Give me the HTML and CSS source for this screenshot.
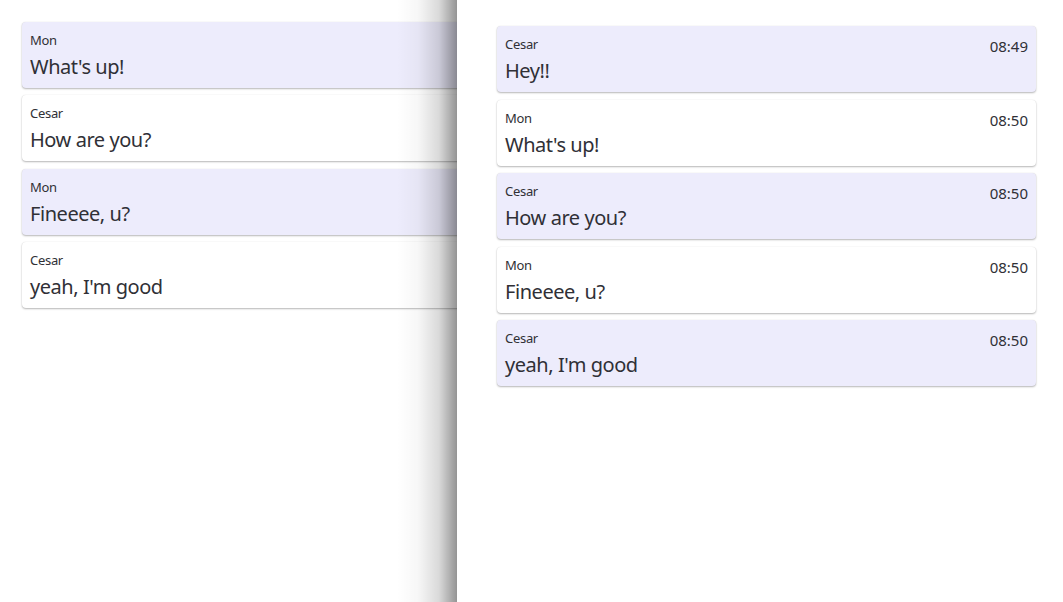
FILE: index.html
```html
<!DOCTYPE html>
<html lang="en">
<head>
<meta charset="utf-8">
<title>Chat</title>
<link rel="stylesheet" href="styles.css">
</head>
<body>
<div class="stage">
  <section class="page page-back">
    <div class="card tint">
      <div class="body"><div class="sender">Mon</div><div class="text">What's up!</div></div>
    </div>
    <div class="card">
      <div class="body"><div class="sender">Cesar</div><div class="text">How are you?</div></div>
    </div>
    <div class="card tint">
      <div class="body"><div class="sender">Mon</div><div class="text">Fineeee, u?</div></div>
    </div>
    <div class="card">
      <div class="body"><div class="sender">Cesar</div><div class="text">yeah, I'm good</div></div>
    </div>
  </section>
  <section class="page page-front">
    <div class="card tint">
      <div class="body"><div class="sender">Cesar</div><div class="text">Hey!!</div></div>
      <div class="time">08:49</div>
    </div>
    <div class="card">
      <div class="body"><div class="sender">Mon</div><div class="text">What's up!</div></div>
      <div class="time">08:50</div>
    </div>
    <div class="card tint">
      <div class="body"><div class="sender">Cesar</div><div class="text">How are you?</div></div>
      <div class="time">08:50</div>
    </div>
    <div class="card">
      <div class="body"><div class="sender">Mon</div><div class="text">Fineeee, u?</div></div>
      <div class="time">08:50</div>
    </div>
    <div class="card tint">
      <div class="body"><div class="sender">Cesar</div><div class="text">yeah, I'm good</div></div>
      <div class="time">08:50</div>
    </div>
  </section>
</div>
</body>
</html>
```
FILE: styles.css
```css
html, body {
  margin: 0;
  padding: 0;
  background: #fff;
}
body {
  font-family: "Noto Sans", "Open Sans", sans-serif;
  color: #303036;
}
.stage {
  display: flex;
  width: 1063px;
  height: 602px;
  overflow: hidden;
}
.page {
  display: flex;
  flex-direction: column;
  gap: 7.5px;
  box-sizing: border-box;
  background: #fff;
}
.page-back {
  flex: 0 0 457px;
  overflow: hidden;
  padding: 21.5px 0 0 22px;
}
.page-back .card {
  width: 539px;
  flex: none;
}
.page-front {
  flex: 1 1 auto;
  position: relative;
  padding: 26px 27px 0 40px;
}
.page-front::before {
  content: "";
  position: absolute;
  top: 0;
  bottom: 0;
  left: -60px;
  width: 60px;
  background: linear-gradient(to right,
    rgba(0,0,0,0) 0%,
    rgba(0,0,0,0.03) 35%,
    rgba(0,0,0,0.15) 70%,
    rgba(0,0,0,0.42) 100%);
  pointer-events: none;
}
.card {
  display: flex;
  justify-content: space-between;
  align-items: flex-start;
  box-sizing: border-box;
  height: 66px;
  padding: 9px 8px 7px 8px;
  border-radius: 4px;
  background: #fff;
  box-shadow: 0 1px 2px rgba(0,0,0,0.28), 0 0 1px rgba(0,0,0,0.12);
}
.card.tint {
  background: #edecfc;
}
.body {
  display: flex;
  flex-direction: column;
  gap: 4px;
}
.sender {
  font-size: 13px;
  line-height: 18px;
  letter-spacing: -0.3px;
}
.text {
  font-size: 20px;
  line-height: 28px;
  letter-spacing: -0.45px;
}
.time {
  font-size: 15px;
  line-height: 21px;
  margin-top: 1px;
}
```
